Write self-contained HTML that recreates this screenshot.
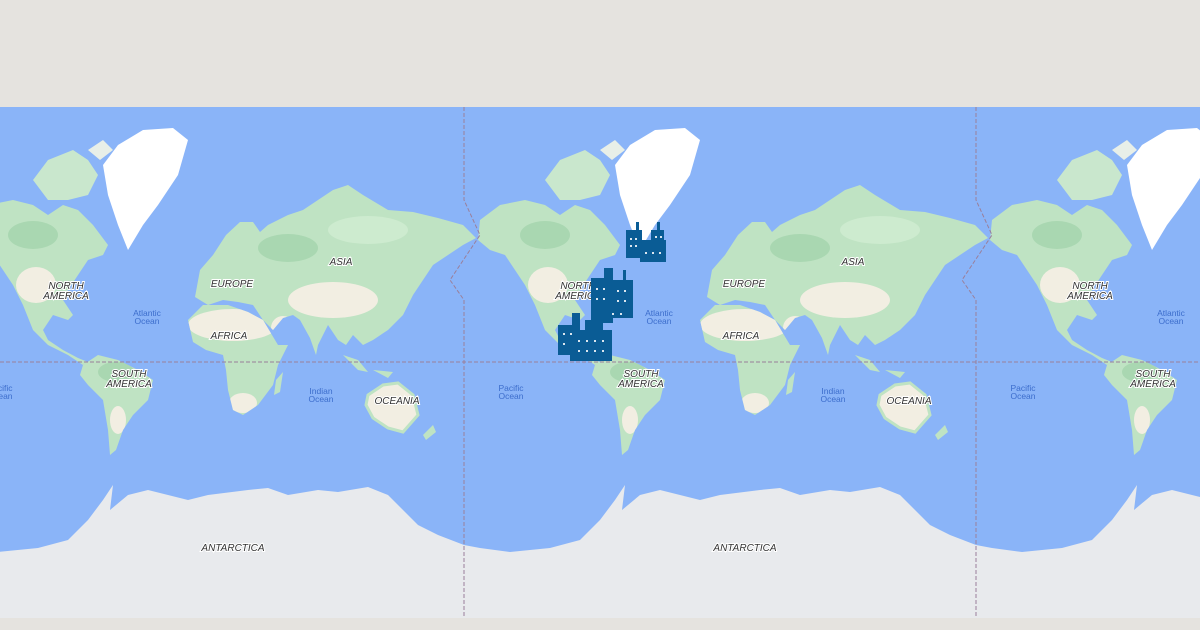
<!DOCTYPE html>
<html><head><meta charset="utf-8"><style>
html,body{margin:0;padding:0;width:1200px;height:630px;overflow:hidden;background:#e5e3df}
svg{position:absolute;left:0;top:0}
.l{font-family:"Liberation Sans",sans-serif;font-size:10px;font-style:italic;fill:#333;text-anchor:middle;stroke:#fff;stroke-width:2px;paint-order:stroke}
.o{font-family:"Liberation Sans",sans-serif;font-size:8.5px;fill:#3c6dcc;text-anchor:middle}
</style></head><body>
<svg width="1200" height="630" viewBox="0 0 1200 630">
<defs>
<path id="na" d="M480,220 L500,205 525,200 545,205 560,215 575,205 590,210 605,225 620,245 615,255 600,260 590,275 580,290 575,300 585,315 580,320 565,315 555,330 560,340 575,350 590,358 600,362 595,365 580,355 560,345 545,330 535,305 525,285 515,270 505,255 490,250 478,240Z"/>
<path id="sa" d="M595,365 L610,355 630,360 650,370 665,380 660,400 645,415 635,430 628,450 622,455 620,430 615,400 600,385 592,375Z"/>
<path id="eu" d="M707,297 L712,270 725,255 738,235 752,222 765,222 772,232 780,225 800,215 815,210 830,200 845,190 860,185 875,195 900,210 925,212 950,218 975,225 988,238 975,245 960,255 945,265 935,280 925,295 915,315 900,330 885,340 875,345 865,335 858,345 850,340 840,325 830,345 828,355 822,338 812,320 805,315 795,318 785,330 775,320 765,305 750,302 735,300 720,305Z"/>
<path id="af" d="M700,320 L715,305 740,305 760,312 775,320 790,345 800,345 790,365 785,385 770,405 755,415 745,410 740,390 738,370 735,355 718,350 705,342Z"/>
<clipPath id="cna"><use href="#na"/></clipPath>
<clipPath id="csa"><use href="#sa"/></clipPath>
<clipPath id="ceu"><use href="#eu"/></clipPath>
<clipPath id="caf"><use href="#af"/></clipPath>
<g id="tile">
<path d="M615,165 L630,145 655,130 685,128 700,140 690,175 670,205 655,225 640,250 630,225 620,195Z" fill="#fff"/>
<path d="M545,180 L560,160 585,150 600,160 610,175 600,195 580,200 560,200Z" fill="#c9e7cd"/>
<path d="M600,150 L615,140 625,150 612,160Z" fill="#e8efe8"/>
<use href="#na" fill="#bfe3c3"/>
<g clip-path="url(#cna)">
<ellipse cx="548" cy="285" rx="20" ry="18" fill="#f2eee2"/>
<ellipse cx="545" cy="235" rx="25" ry="14" fill="#a9d7b1"/>
</g>
<use href="#sa" fill="#bfe3c3"/>
<g clip-path="url(#csa)">
<ellipse cx="628" cy="372" rx="18" ry="10" fill="#a9d7b1"/>
<ellipse cx="630" cy="420" rx="8" ry="14" fill="#f2eee2"/>
</g>
<use href="#eu" fill="#bfe3c3"/>
<g clip-path="url(#ceu)">
<ellipse cx="800" cy="248" rx="30" ry="14" fill="#a9d7b1"/>
<ellipse cx="880" cy="230" rx="40" ry="14" fill="#cdebcf"/>
<ellipse cx="845" cy="300" rx="45" ry="18" fill="#f2eee2"/>
<ellipse cx="795" cy="328" rx="12" ry="12" fill="#f2eee2"/>
</g>
<use href="#af" fill="#bfe3c3"/>
<g clip-path="url(#caf)">
<ellipse cx="745" cy="325" rx="45" ry="16" fill="#f2eee2"/>
<ellipse cx="755" cy="403" rx="14" ry="10" fill="#f2eee2"/>
</g>
<path d="M788,380 L795,372 792,392 786,395Z" fill="#bfe3c3"/>
<path d="M855,355 L870,360 880,372 870,370Z M885,370 L905,372 900,378Z" fill="#bfe3c3"/>
<path d="M880,395 L895,385 910,383 925,395 930,415 915,432 900,428 885,418 878,405Z" fill="#f2eee2" stroke="#bfe3c3" stroke-width="3"/>
<path d="M935,435 L945,425 948,432 938,440Z" fill="#bfe3c3"/>
<path d="M464,545 L480,548 510,552 550,548 580,540 600,520 615,500 625,485 622,510 640,495 660,490 700,500 720,495 760,490 780,488 800,495 830,490 850,492 880,487 900,495 915,510 930,525 950,535 976,545 976,620 464,620Z" fill="#e8eaed"/>
</g>
</defs>
<rect x="0" y="107" width="1200" height="511" fill="#8ab4f8"/>
<use href="#tile" x="-512"/>
<use href="#tile"/>
<use href="#tile" x="512"/>
<use href="#tile" x="-1024"/>
<rect x="0" y="618" width="1200" height="12" fill="#e5e3df"/>
<g stroke="#9a7f9a" stroke-width="1" stroke-dasharray="4,2" fill="none">
<line x1="0" y1="362" x2="1200" y2="362"/>
<path d="M464,107 V200 L480,235 450,280 464,300 V618"/>
<path d="M976,107 V200 L992,235 962,280 976,300 V618"/>
</g>
<g class="l">
<text x="66" y="289">NORTH</text><text x="66" y="299">AMERICA</text>
<text x="129" y="377">SOUTH</text><text x="129" y="387">AMERICA</text>
<text x="232" y="287">EUROPE</text><text x="341" y="265">ASIA</text>
<text x="229" y="339">AFRICA</text><text x="397" y="404">OCEANIA</text>
<text x="233" y="551">ANTARCTICA</text>
<text x="578" y="289">NORTH</text><text x="578" y="299">AMERICA</text>
<text x="641" y="377">SOUTH</text><text x="641" y="387">AMERICA</text>
<text x="744" y="287">EUROPE</text><text x="853" y="265">ASIA</text>
<text x="741" y="339">AFRICA</text><text x="909" y="404">OCEANIA</text>
<text x="745" y="551">ANTARCTICA</text>
<text x="1090" y="289">NORTH</text><text x="1090" y="299">AMERICA</text>
<text x="1153" y="377">SOUTH</text><text x="1153" y="387">AMERICA</text>
</g>
<g class="o">
<text x="147" y="316">Atlantic</text><text x="147" y="324">Ocean</text>
<text x="321" y="394">Indian</text><text x="321" y="402">Ocean</text>
<text x="0" y="391">Pacific</text><text x="0" y="399">Ocean</text>
<text x="659" y="316">Atlantic</text><text x="659" y="324">Ocean</text>
<text x="833" y="394">Indian</text><text x="833" y="402">Ocean</text>
<text x="511" y="391">Pacific</text><text x="511" y="399">Ocean</text>
<text x="1171" y="316">Atlantic</text><text x="1171" y="324">Ocean</text>
<text x="1023" y="391">Pacific</text><text x="1023" y="399">Ocean</text>
</g>
<g fill="#0a5c95">
<rect x="626" y="230" width="16" height="28"/><rect x="636" y="222" width="3" height="10"/>
<rect x="640" y="240" width="26" height="22"/><rect x="651" y="230" width="13" height="14"/><rect x="657" y="222" width="3" height="10"/>
<rect x="591" y="278" width="22" height="45"/><rect x="604" y="268" width="9" height="12"/>
<rect x="612" y="280" width="21" height="38"/><rect x="623" y="270" width="3" height="12"/>
<rect x="558" y="325" width="22" height="30"/><rect x="572" y="313" width="8" height="14"/>
<rect x="570" y="330" width="42" height="31"/><rect x="585" y="320" width="18" height="12"/>
</g>
<g fill="#fff" opacity="0.85">
<rect x="630" y="238" width="2" height="2"/><rect x="635" y="238" width="2" height="2"/><rect x="630" y="245" width="2" height="2"/><rect x="635" y="245" width="2" height="2"/>
<rect x="655" y="236" width="2" height="2"/><rect x="660" y="236" width="2" height="2"/><rect x="645" y="252" width="2" height="2"/><rect x="652" y="252" width="2" height="2"/><rect x="659" y="252" width="2" height="2"/>
<rect x="596" y="288" width="2" height="2"/><rect x="603" y="288" width="2" height="2"/><rect x="596" y="298" width="2" height="2"/><rect x="603" y="298" width="2" height="2"/><rect x="617" y="290" width="2" height="2"/><rect x="624" y="290" width="2" height="2"/><rect x="617" y="300" width="2" height="2"/><rect x="624" y="300" width="2" height="2"/><rect x="612" y="313" width="2" height="2"/><rect x="620" y="313" width="2" height="2"/>
<rect x="563" y="333" width="2" height="2"/><rect x="570" y="333" width="2" height="2"/><rect x="563" y="343" width="2" height="2"/><rect x="578" y="340" width="2" height="2"/><rect x="586" y="340" width="2" height="2"/><rect x="594" y="340" width="2" height="2"/><rect x="602" y="340" width="2" height="2"/><rect x="578" y="350" width="2" height="2"/><rect x="586" y="350" width="2" height="2"/><rect x="594" y="350" width="2" height="2"/><rect x="602" y="350" width="2" height="2"/>
</g>
</svg>
</body></html>
